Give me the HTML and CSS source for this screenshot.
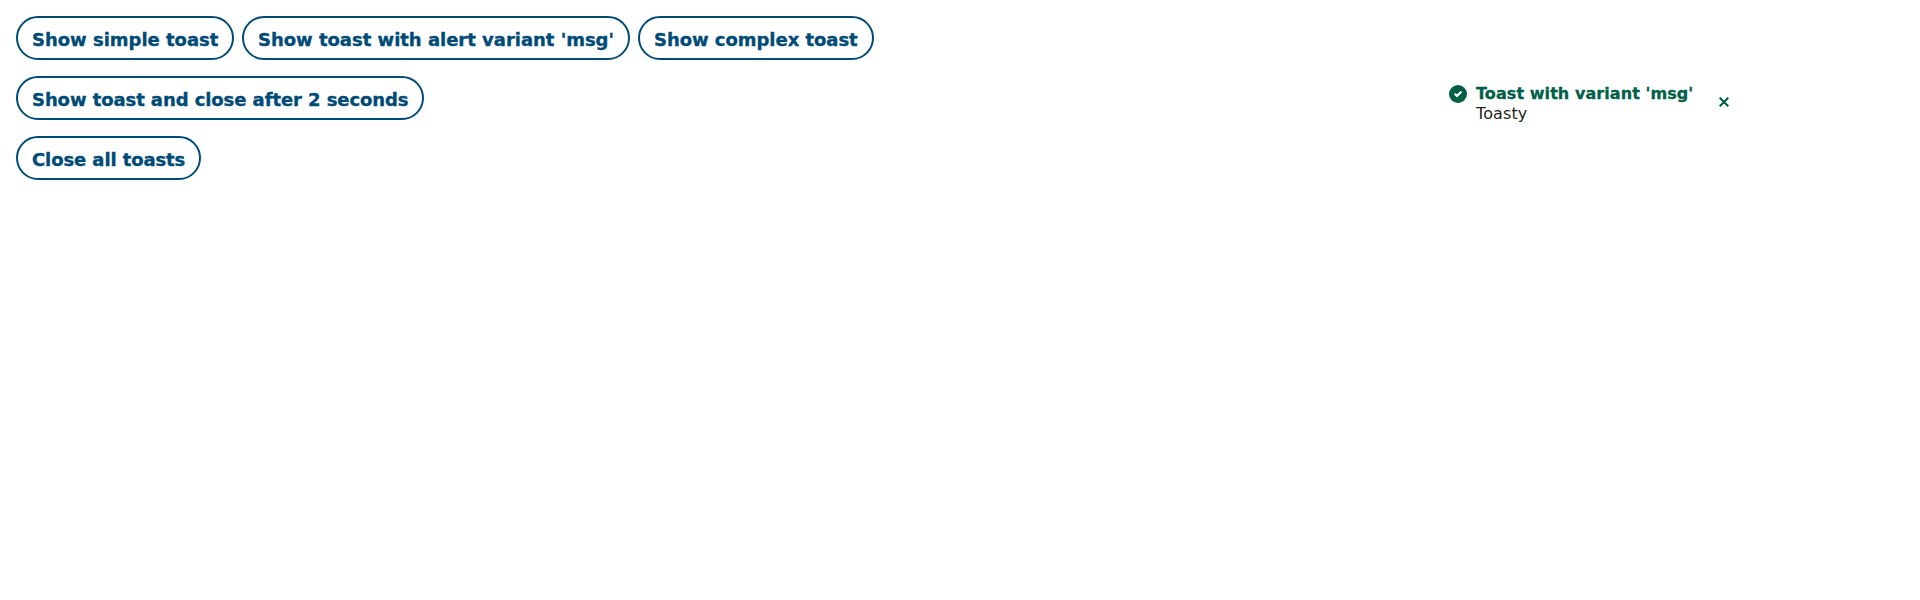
FILE: index.html
```html
<!DOCTYPE html>
<html lang="en">
<head>
<meta charset="utf-8">
<title>Toasts</title>
<link rel="stylesheet" href="styles.css">
</head>
<body>
<main class="demo">
  <div class="row">
    <button class="button simple">Show simple toast</button>
    <button class="button variant">Show toast with alert variant 'msg'</button>
    <button class="button complex">Show complex toast</button>
  </div>
  <div class="row"><button class="button timed">Show toast and close after 2 seconds</button></div>
  <div class="row"><button class="button close-all">Close all toasts</button></div>
</main>
<aside class="toast" role="status">
  <svg class="icon" viewBox="0 0 18 18" aria-hidden="true"><circle cx="9" cy="9" r="9" fill="currentColor"/><path d="M6.2 9.3 8 10.9 11.8 7.2" fill="none" stroke="#fff" stroke-width="2.2" stroke-linecap="round"/></svg>
  <div class="content">
    <div class="title">Toast with variant 'msg'</div>
    <div class="message">Toasty</div>
  </div>
  <button class="dismiss" aria-label="Close"><svg viewBox="0 0 10 10" width="10" height="10"><path d="M.7.7 9.3 9.3M9.3.7.7 9.3" fill="none" stroke="currentColor" stroke-width="2.1"/></svg></button>
</aside>
</body>
</html>
```
FILE: styles.css
```css
body {
  margin: 0;
  background: #fff;
  font-family: Verdana, "DejaVu Sans", sans-serif;
}

.demo {
  display: flex;
  flex-direction: column;
  gap: 16px;
  padding: 16px;
}

.row {
  display: flex;
  gap: 8px;
}

.button {
  box-sizing: border-box;
  height: 44px;
  padding: 4px 0 0 14px;
  border: 2px solid #004b76;
  border-radius: 22px;
  background: #fff;
  color: #004b76;
  font: bold 18px/24px Verdana, "DejaVu Sans", sans-serif;
  text-align: left;
  white-space: nowrap;
  -webkit-text-stroke: 0.35px currentColor;
}

.simple { width: 218px; letter-spacing: -0.02px; }
.variant { width: 388px; letter-spacing: -0.02px; }
.complex { width: 236px; letter-spacing: -0.04px; }
.timed { width: 408px; letter-spacing: -0.08px; }
.close-all { width: 185px; letter-spacing: -0.1px; }

.toast {
  position: absolute;
  top: 84px;
  left: 1449px;
  display: flex;
  width: 281px;
  color: #006047;
}

.icon {
  flex: none;
  width: 18px;
  height: 18px;
  margin: 1px 9px 0 0;
}

.content {
  flex: 1;
  font-size: 16px;
  line-height: 20px;
  white-space: nowrap;
}

.title {
  font-weight: bold;
  letter-spacing: 0.07px;
  -webkit-text-stroke: 0.3px currentColor;
}

.message {
  color: #1f1f1f;
  letter-spacing: 0.1px;
}

.dismiss {
  display: flex;
  height: 10px;
  margin: 13px 1px 0 0;
  padding: 0;
  border: 0;
  background: none;
  color: inherit;
}
```
